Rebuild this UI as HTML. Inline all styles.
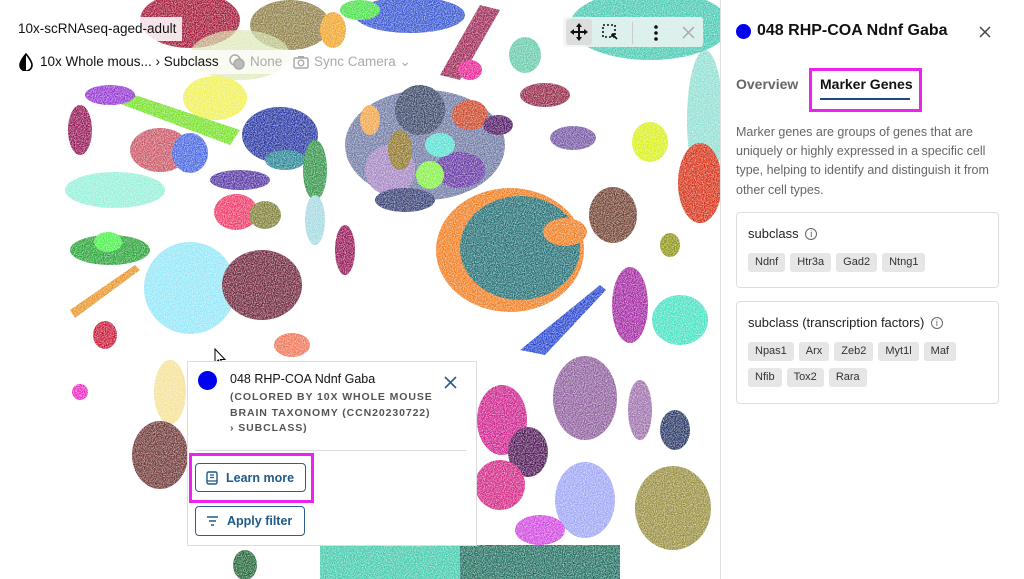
<!DOCTYPE html>
<html><head><meta charset="utf-8"><style>
*{margin:0;padding:0;box-sizing:border-box}
body{width:1024px;height:579px;overflow:hidden;background:#fff;font-family:"Liberation Sans",sans-serif;position:relative}
#plot{position:absolute;left:0;top:0;width:720px;height:579px;overflow:hidden}
.abs{position:absolute}
.chip{display:inline-block;background:#e6e6e6;border-radius:3px;font-size:11px;color:#333;padding:0 7px;height:19px;line-height:19px;margin-right:5px}
.card{position:absolute;left:736px;width:263px;border:1px solid #ddd;border-radius:4px}
.btn{position:absolute;left:195px;border:1.5px solid #2b5f8e;border-radius:4px;color:#1e5a8a;font-weight:bold;font-size:12.5px;display:flex;align-items:center;padding-left:10px}
</style></head><body>
<div id="plot">
<svg width="720" height="579" viewBox="0 0 720 579">
<defs><filter id="f" x="-20%" y="-20%" width="140%" height="140%"><feTurbulence type="fractalNoise" baseFrequency="0.9" numOctaves="1" result="n"/><feColorMatrix in="n" type="matrix" values="0 0 0 0 0 0 0 0 0 0 0 0 0 0 0 0 0 0 -1.6 1.55" result="m"/><feComposite in="SourceGraphic" in2="m" operator="in"/></filter></defs>
<g filter="url(#f)">
<ellipse cx="190" cy="20" rx="50" ry="28" fill="#a01030"/>
<ellipse cx="290" cy="25" rx="40" ry="25" fill="#8a7a40"/>
<ellipse cx="333" cy="30" rx="13" ry="18" fill="#f0a020"/>
<ellipse cx="410" cy="15" rx="55" ry="18" fill="#3050d0"/>
<ellipse cx="360" cy="10" rx="20" ry="10" fill="#40e040"/>
<path d="M480 5 L500 10 L460 80 L440 75 Z" fill="#9a2050"/>
<ellipse cx="650" cy="25" rx="80" ry="35" fill="#40c8b0"/>
<ellipse cx="705" cy="120" rx="18" ry="70" fill="#40c8b0" opacity=".6"/>
<ellipse cx="525" cy="55" rx="16" ry="18" fill="#60c8a8"/>
<ellipse cx="470" cy="70" rx="12" ry="10" fill="#e81890"/>
<ellipse cx="240" cy="55" rx="50" ry="25" fill="#d0e0a0" opacity=".7"/>
<ellipse cx="215" cy="98" rx="32" ry="22" fill="#f0f050"/>
<path d="M120 90 L240 130 L230 145 L110 100Z" fill="#70e020"/>
<ellipse cx="110" cy="95" rx="25" ry="10" fill="#9030d0"/>
<ellipse cx="80" cy="130" rx="12" ry="25" fill="#901050"/>
<ellipse cx="160" cy="150" rx="30" ry="22" fill="#c85060"/>
<ellipse cx="190" cy="153" rx="18" ry="20" fill="#4060e0"/>
<ellipse cx="280" cy="135" rx="38" ry="28" fill="#2030a0"/>
<ellipse cx="285" cy="160" rx="20" ry="10" fill="#208090"/>
<ellipse cx="240" cy="180" rx="30" ry="10" fill="#5030a0"/>
<ellipse cx="115" cy="190" rx="50" ry="18" fill="#90f0d8"/>
<ellipse cx="236" cy="212" rx="22" ry="18" fill="#f03060"/>
<ellipse cx="265" cy="215" rx="16" ry="14" fill="#7a7a30"/>
<ellipse cx="315" cy="170" rx="12" ry="30" fill="#2a9040"/>
<ellipse cx="315" cy="220" rx="10" ry="25" fill="#a0d8e0"/>
<ellipse cx="425" cy="145" rx="80" ry="55" fill="#6a74a0"/>
<ellipse cx="420" cy="110" rx="25" ry="25" fill="#334060"/>
<ellipse cx="390" cy="170" rx="25" ry="25" fill="#a080c0"/>
<ellipse cx="400" cy="150" rx="12" ry="20" fill="#8a7020"/>
<ellipse cx="460" cy="170" rx="25" ry="18" fill="#6030a0"/>
<ellipse cx="470" cy="115" rx="18" ry="15" fill="#c84020"/>
<ellipse cx="440" cy="145" rx="15" ry="12" fill="#50e0d0"/>
<ellipse cx="370" cy="120" rx="10" ry="15" fill="#f0a040"/>
<ellipse cx="430" cy="175" rx="14" ry="14" fill="#80f040"/>
<ellipse cx="498" cy="125" rx="15" ry="10" fill="#4a1060"/>
<ellipse cx="405" cy="200" rx="30" ry="12" fill="#303870"/>
<ellipse cx="345" cy="250" rx="10" ry="25" fill="#901050"/>
<ellipse cx="545" cy="95" rx="25" ry="12" fill="#902040"/>
<ellipse cx="573" cy="138" rx="23" ry="12" fill="#7050a0"/>
<ellipse cx="650" cy="142" rx="18" ry="20" fill="#d8f010"/>
<ellipse cx="700" cy="183" rx="22" ry="40" fill="#d42a10"/>
<ellipse cx="670" cy="245" rx="10" ry="12" fill="#8a9010"/>
<ellipse cx="510" cy="250" rx="74" ry="62" fill="#f07818"/>
<ellipse cx="520" cy="248" rx="60" ry="52" fill="#1a6a70"/>
<ellipse cx="565" cy="232" rx="22" ry="14" fill="#f07818"/>
<ellipse cx="613" cy="215" rx="24" ry="28" fill="#6b3a2a"/>
<ellipse cx="110" cy="250" rx="40" ry="15" fill="#20a030"/>
<ellipse cx="108" cy="242" rx="14" ry="10" fill="#40f040"/>
<path d="M70 310 L135 265 L140 270 L75 318Z" fill="#e89020"/>
<ellipse cx="190" cy="288" rx="46" ry="46" fill="#8fe6f8"/>
<ellipse cx="262" cy="285" rx="40" ry="35" fill="#6a1f35"/>
<ellipse cx="105" cy="335" rx="12" ry="14" fill="#c81030"/>
<ellipse cx="80" cy="392" rx="8" ry="8" fill="#f020c0"/>
<ellipse cx="170" cy="392" rx="16" ry="32" fill="#f5e090"/>
<ellipse cx="160" cy="455" rx="28" ry="34" fill="#6a3030"/>
<ellipse cx="292" cy="345" rx="18" ry="12" fill="#f07050"/>
<path d="M600 285 L606 290 L545 355 L520 350Z" fill="#2040d0"/>
<ellipse cx="630" cy="305" rx="18" ry="38" fill="#a020a0"/>
<ellipse cx="680" cy="320" rx="28" ry="25" fill="#40e0c0"/>
<ellipse cx="585" cy="398" rx="32" ry="42" fill="#8a5a9a"/>
<ellipse cx="640" cy="410" rx="12" ry="30" fill="#9a6aa8"/>
<ellipse cx="502" cy="420" rx="25" ry="35" fill="#cc1a8a"/>
<ellipse cx="528" cy="452" rx="20" ry="25" fill="#4a1050"/>
<ellipse cx="500" cy="485" rx="25" ry="25" fill="#d02080"/>
<ellipse cx="585" cy="500" rx="30" ry="38" fill="#9aa2f5"/>
<ellipse cx="673" cy="508" rx="38" ry="42" fill="#948a38"/>
<ellipse cx="675" cy="430" rx="15" ry="20" fill="#203060"/>
<ellipse cx="540" cy="530" rx="25" ry="15" fill="#d040e0"/>
<rect x="320" y="545" width="140" height="40" fill="#3cc8a8"/>
<rect x="460" y="545" width="160" height="40" fill="#1a6a5a"/>
<ellipse cx="245" cy="565" rx="12" ry="15" fill="#1a6030"/>
</g>
</svg>
</div>

<div class="abs" style="left:12px;top:17px;height:24px;padding:0 6px;background:rgba(255,255,255,.85);font-size:13.5px;line-height:24px;color:#111">10x-scRNAseq-aged-adult</div>
<div class="abs" style="left:12px;top:50px;height:24px;width:405px;background:rgba(255,255,255,.75)"></div>
<svg class="abs" style="left:18px;top:53px" width="16" height="18" viewBox="0 0 16 18"><path d="M8 1 C8 1 2 8 2 12 a6 6 0 0 0 12 0 C14 8 8 1 8 1Z" fill="none" stroke="#000" stroke-width="1.6"/><path d="M8 1 C8 1 2 8 2 12 a6 6 0 0 0 6 6Z" fill="#000"/></svg>
<div class="abs" style="left:40px;top:54px;font-size:13.5px;color:#111;white-space:nowrap">10x Whole mous... › Subclass</div>
<svg class="abs" style="left:229px;top:54px" width="17" height="16"><circle cx="6" cy="6" r="5" fill="none" stroke="#aaa" stroke-width="1.5"/><circle cx="10" cy="10" r="5" fill="#bbb" stroke="#aaa" stroke-width="1.5"/></svg>
<div class="abs" style="left:250px;top:54px;font-size:13.5px;color:#aaa">None</div>
<svg class="abs" style="left:293px;top:55px" width="16" height="14"><rect x="1" y="3" width="14" height="10" rx="1.5" fill="none" stroke="#aaa" stroke-width="1.5"/><circle cx="8" cy="8" r="2.8" fill="none" stroke="#aaa" stroke-width="1.4"/><rect x="5" y="1" width="6" height="2" fill="#aaa"/></svg>
<div class="abs" style="left:314px;top:54px;font-size:13.5px;color:#aaa">Sync Camera ⌄</div>

<div class="abs" style="left:563px;top:17px;width:140px;height:30px;background:rgba(240,245,243,.85);border-radius:3px"></div>
<div class="abs" style="left:566px;top:19px;width:26px;height:26px;background:#ddd;border-radius:3px"></div>
<svg class="abs" style="left:569px;top:22px" width="20" height="20" viewBox="0 0 20 20"><path d="M10 1 L13 5 H7Z M10 19 L13 15 H7Z M1 10 L5 7 V13Z M19 10 L15 7 V13Z" fill="#111"/><rect x="9" y="5" width="2" height="10" fill="#111"/><rect x="5" y="9" width="10" height="2" fill="#111"/></svg>
<svg class="abs" style="left:601px;top:23px" width="18" height="18"><rect x="2" y="2" width="12" height="12" fill="none" stroke="#111" stroke-width="1.6" stroke-dasharray="2 2"/><path d="M11 11 L16 16 M11 11 h3 M11 11 v3" stroke="#111" stroke-width="1.6"/></svg>
<div class="abs" style="left:632px;top:22px;width:1px;height:22px;background:#ccc"></div>
<svg class="abs" style="left:652px;top:24px" width="8" height="18"><circle cx="4" cy="3" r="1.8" fill="#111"/><circle cx="4" cy="9" r="1.8" fill="#111"/><circle cx="4" cy="15" r="1.8" fill="#111"/></svg>
<svg class="abs" style="left:682px;top:26px" width="13" height="13"><path d="M1 1L12 12M12 1L1 12" stroke="#aaa" stroke-width="1.5"/></svg>

<svg class="abs" style="left:214px;top:348px" width="14" height="20"><path d="M1 1 L1 15 L4.5 12 L7 18 L9 17 L6.5 11.5 L11 11.5Z" fill="#fff" stroke="#000" stroke-width="1"/></svg>

<div class="abs" style="left:187px;top:361px;width:290px;height:185px;background:#fff;border:1px solid #ddd"></div>
<div class="abs" style="left:198px;top:371px;width:19px;height:19px;border-radius:50%;background:#0000ee"></div>
<div class="abs" style="left:230px;top:372px;font-size:12.5px;color:#111">048 RHP-COA Ndnf Gaba</div>
<div class="abs" style="left:230px;top:390px;font-size:10.5px;font-weight:bold;color:#555;letter-spacing:.9px;line-height:15.5px;width:240px">(COLORED BY 10X WHOLE MOUSE<br>BRAIN TAXONOMY (CCN20230722)<br>› SUBCLASS)</div>
<svg class="abs" style="left:444px;top:376px" width="13" height="13"><path d="M1 1L12 12M12 1L1 12" stroke="#2b5f8e" stroke-width="1.6"/></svg>
<div class="abs" style="left:195px;top:450px;width:272px;height:1px;background:#ddd"></div>
<div class="abs" style="left:189px;top:453px;width:125px;height:50px;border:3px solid #ee22ee"></div>
<div class="btn" style="top:463px;width:111px;height:29px"><svg width="12" height="14" style="margin-right:8px"><rect x="1" y="1" width="10" height="12" rx="1.5" fill="none" stroke="#1e5a8a" stroke-width="1.4"/><path d="M4 4h4M4 6.5h4M1 10h10" stroke="#1e5a8a" stroke-width="1.2"/></svg>Learn more</div>
<div class="btn" style="top:506px;width:110px;height:30px"><svg width="13" height="12" style="margin-right:8px"><path d="M1 2h11M3 6h7M5 10h3" stroke="#1e5a8a" stroke-width="1.5"/></svg>Apply filter</div>

<div class="abs" style="left:720px;top:0;width:304px;height:579px;background:#fff;border-left:1px solid #e0e0e0"></div>
<div class="abs" style="left:736px;top:24px;width:15px;height:15px;border-radius:50%;background:#0000ee"></div>
<div class="abs" style="left:757px;top:22px;font-size:16px;font-weight:bold;color:#111">048 RHP-COA Ndnf Gaba</div>
<svg class="abs" style="left:979px;top:26px" width="12" height="12"><path d="M1 1L11 11M11 1L1 11" stroke="#444" stroke-width="1.5"/></svg>
<div class="abs" style="left:736px;top:76px;font-size:14px;font-weight:bold;color:#666">Overview</div>
<div class="abs" style="left:820px;top:76px;font-size:14px;font-weight:bold;color:#111">Marker Genes</div>
<div class="abs" style="left:820px;top:98px;width:90px;height:2px;background:#1a4a8a"></div>
<div class="abs" style="left:809px;top:68px;width:113px;height:44px;border:3px solid #ee22ee"></div>
<div class="abs" style="left:736px;top:123px;width:270px;font-size:12.5px;line-height:19.2px;color:#666">Marker genes are groups of genes that are uniquely or highly expressed in a specific cell type, helping to identify and distinguish it from other cell types.</div>
<div class="card" style="top:212px;height:76px"></div>
<div class="abs" style="left:748px;top:226px;font-size:13px;color:#222">subclass <span style="display:inline-block;width:12px;height:12px;border:1px solid #666;border-radius:50%;font-size:9px;text-align:center;line-height:11px;vertical-align:1px;margin-left:3px;color:#555">i</span></div>
<div class="abs" style="left:748px;top:252px"><span class="chip">Ndnf</span><span class="chip">Htr3a</span><span class="chip">Gad2</span><span class="chip">Ntng1</span></div>
<div class="card" style="top:301px;height:103px"></div>
<div class="abs" style="left:748px;top:315px;font-size:13px;color:#222">subclass (transcription factors) <span style="display:inline-block;width:12px;height:12px;border:1px solid #666;border-radius:50%;font-size:9px;text-align:center;line-height:11px;vertical-align:1px;margin-left:3px;color:#555">i</span></div>
<div class="abs" style="left:748px;top:341px"><span class="chip">Npas1</span><span class="chip">Arx</span><span class="chip">Zeb2</span><span class="chip">Myt1l</span><span class="chip">Maf</span></div>
<div class="abs" style="left:748px;top:367px"><span class="chip">Nfib</span><span class="chip">Tox2</span><span class="chip">Rara</span></div>
</body></html>
